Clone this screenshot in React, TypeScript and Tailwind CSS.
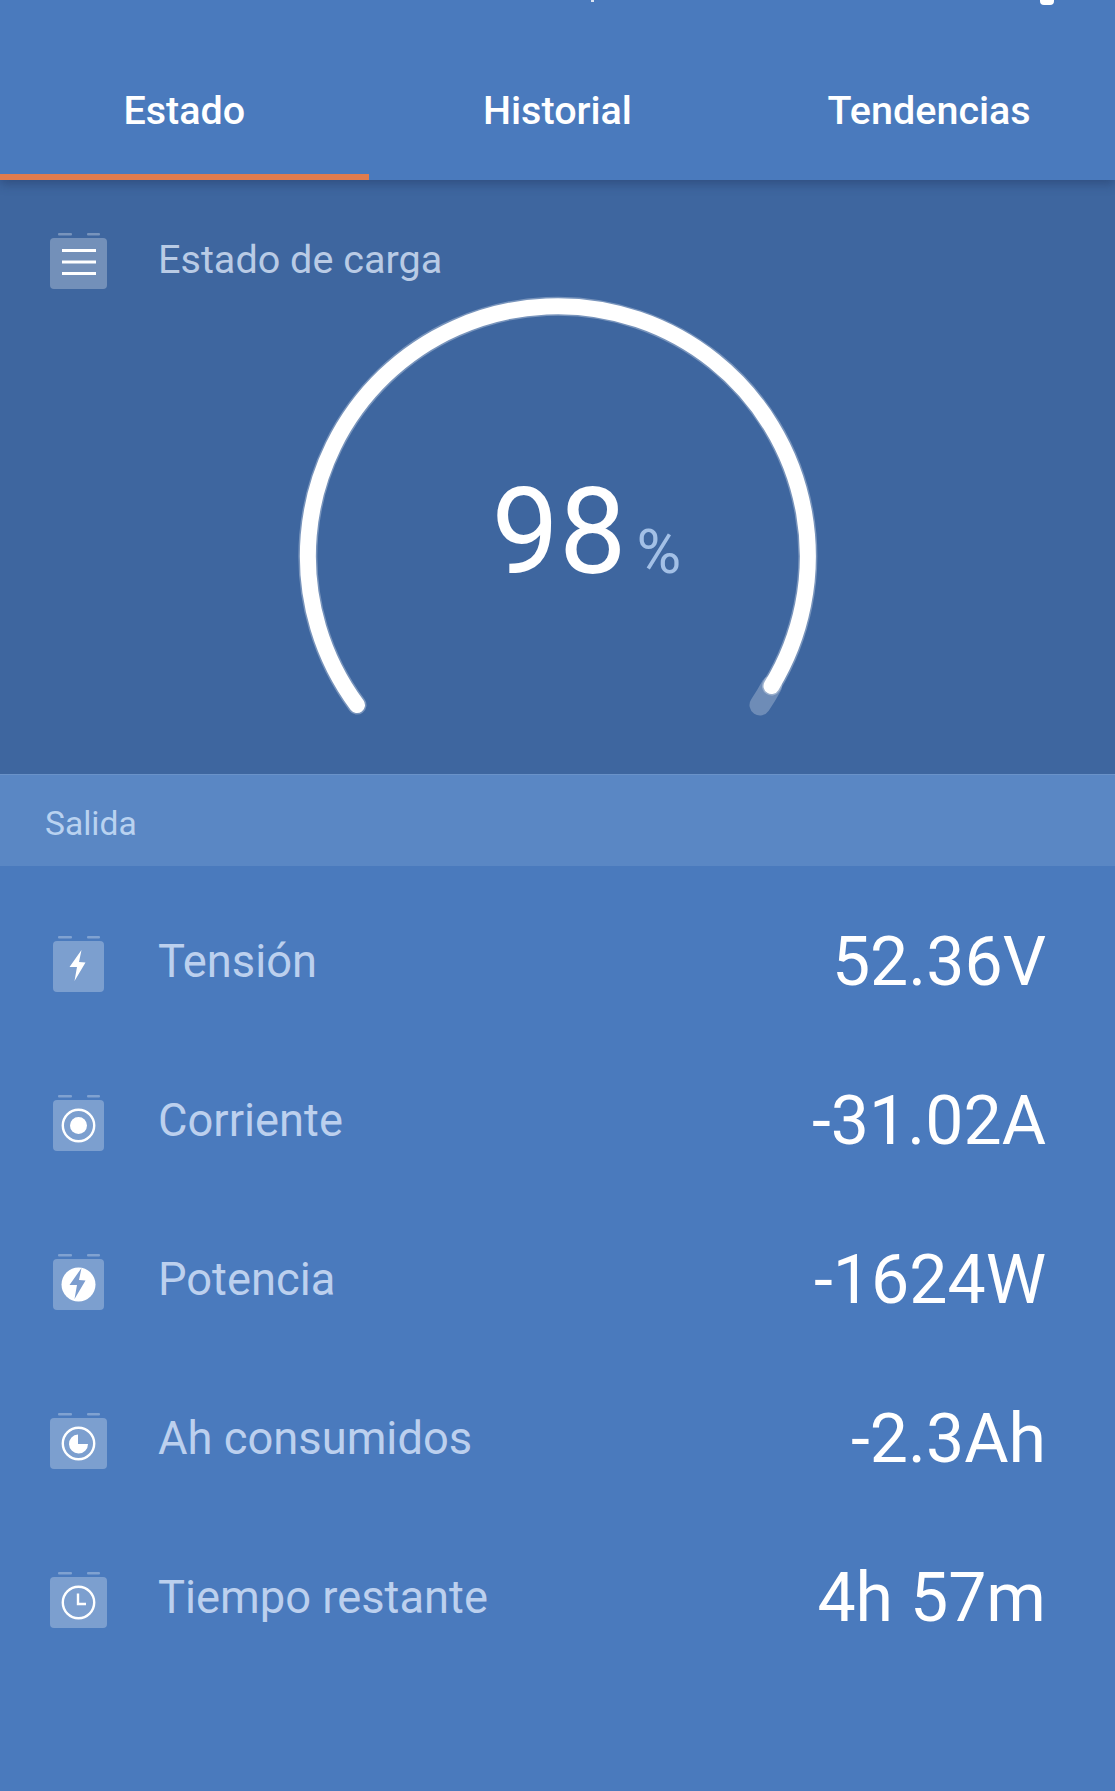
import type { ReactNode } from "react";

const tabs = ["Estado", "Historial", "Tendencias"];

function BatteryIcon({ narrow, children }: { narrow?: boolean; children: ReactNode }) {
  const x = narrow ? 3 : 0;
  const w = narrow ? 51 : 57;

  return (
    <svg viewBox="0 0 57 57" className="w-[57px] h-[57px] shrink-0 mt-[3px]">
      <rect x="8" y="1" width="14" height="2.5" rx="1" fill="#ffffff" fillOpacity="0.3" />
      <rect x="37" y="1" width="13" height="2.5" rx="1" fill="#ffffff" fillOpacity="0.3" />
      <rect x={x} y="6" width={w} height="51" rx="4" fill="#ffffff" fillOpacity="0.28" />
      {children}
    </svg>
  );
}

const bolt = "M31.5 15 L19.5 32 L27 32 L24.5 46 L35.5 27.5 L29 27 Z";

function TensionIcon() {
  return (
    <BatteryIcon narrow>
      <path d={bolt} fill="#ffffff" />
    </BatteryIcon>
  );
}

function CorrienteIcon() {
  return (
    <BatteryIcon narrow>
      <circle cx="28.5" cy="31.5" r="15.7" fill="none" stroke="#ffffff" strokeWidth="2.4" />
      <circle cx="28.5" cy="31.5" r="8.5" fill="#ffffff" />
    </BatteryIcon>
  );
}

function PotenciaIcon() {
  return (
    <BatteryIcon narrow>
      <circle cx="28.5" cy="31.5" r="17" fill="#ffffff" />
      <path d={bolt} fill="#7c9dcf" />
    </BatteryIcon>
  );
}

function ConsumedIcon() {
  return (
    <BatteryIcon>
      <circle cx="28.5" cy="31.5" r="15.7" fill="none" stroke="#ffffff" strokeWidth="2.4" />
      <path d="M28 22.5 A9.5 9.5 0 1 0 38 32 L28 32 Z" fill="#ffffff" />
    </BatteryIcon>
  );
}

function ClockIcon() {
  return (
    <BatteryIcon>
      <circle cx="28.5" cy="31.5" r="15.7" fill="none" stroke="#ffffff" strokeWidth="2.4" />
      <path d="M28 22.5 V33 H36" fill="none" stroke="#ffffff" strokeWidth="2.4" />
    </BatteryIcon>
  );
}

const rows = [
  { label: "Tensión", value: "52.36V", icon: <TensionIcon /> },
  { label: "Corriente", value: "-31.02A", icon: <CorrienteIcon /> },
  { label: "Potencia", value: "-1624W", icon: <PotenciaIcon /> },
  { label: "Ah consumidos", value: "-2.3Ah", icon: <ConsumedIcon /> },
  { label: "Tiempo restante", value: "4h 57m", icon: <ClockIcon /> },
];

export default function App() {
  return (
    <div className="relative w-[1115px] h-[1791px] overflow-hidden bg-[#4a7abd] font-['Roboto',sans-serif]">
      {/* Status bar leftovers */}
      <div className="absolute z-20 left-[1040px] top-0 w-[14px] h-[5px] rounded-b-sm bg-white" />
      <div className="absolute z-20 left-[591px] top-0 w-[3px] h-[2px] bg-white/80" />

      {/* Tabs */}
      <header className="relative z-10 h-[180px] grid grid-cols-3 shadow-[0_4px_10px_rgba(30,50,90,0.45)] bg-[#4a7abd]">
        {tabs.map((tab, i) => (
          <div key={tab} className={`relative flex justify-center pt-[86px] ${i === 0 ? "pr-[3px]" : ""}`}>
            <span className="text-white text-[39.5px] leading-[50px] font-medium">{tab}</span>
            {i === 0 && <div className="absolute left-0 w-[369px] bottom-0 h-[6px] bg-[#e17c4e]" />}
          </div>
        ))}
      </header>

      {/* State of charge */}
      <section className="h-[594px] bg-[#3e669f]">
        <div className="flex items-center h-[108px] pt-[50px] pl-[50px]">
          <BatteryIcon>
            <path d="M12 18.5 H46 M12 30 H46 M12 41.5 H46" fill="none" stroke="#ffffff" strokeWidth="3" />
          </BatteryIcon>
          <span className="ml-[51px] mt-[1px] text-[39.6px] text-[#b9cbe5]">Estado de carga</span>
        </div>
        <div className="relative w-[540px] h-[430px] mx-auto mt-[2px]">
          <svg viewBox="0 0 540 430" className="w-[540px] h-[430px]">
            <path d="M483.5 396 A250 250 0 0 1 472 415" fill="none" stroke="#ffffff" strokeOpacity="0.25" strokeWidth="21" strokeLinecap="round" />
            <path d="M69 415 A250 250 0 1 1 483.5 396" fill="none" stroke="#ffffff" strokeOpacity="0.3" strokeWidth="19" strokeLinecap="round" />
            <path d="M69 415 A250 250 0 1 1 483.5 396" fill="none" stroke="#ffffff" strokeWidth="16" strokeLinecap="round" />
          </svg>
          <div className="absolute left-[204px] top-[172px] flex items-baseline text-white">
            <span className="text-[120px] leading-[140px]">98</span>
            <span className="ml-[10px] text-[61px] leading-[140px] text-[#a3c0e6]">%</span>
          </div>
        </div>
      </section>

      {/* Salida */}
      <div className="h-[92px] flex items-center pl-[45px] pt-[8px] bg-[#5a87c4] border-t border-[#6a92c8]">
        <span className="text-[33.6px] text-[#b9d2f0]">Salida</span>
      </div>

      {/* Readings */}
      <div className="pt-[16px]">
        {rows.map((row) => (
          <div key={row.label} className="h-[159px] flex items-center pl-[50px] pr-[69px]">
            {row.icon}
            <span className="ml-[51px] mt-[1px] text-[45.3px] text-[#bcd0ee]">{row.label}</span>
            <span className="ml-auto text-[68px] text-white">{row.value}</span>
          </div>
        ))}
      </div>
    </div>
  );
}
